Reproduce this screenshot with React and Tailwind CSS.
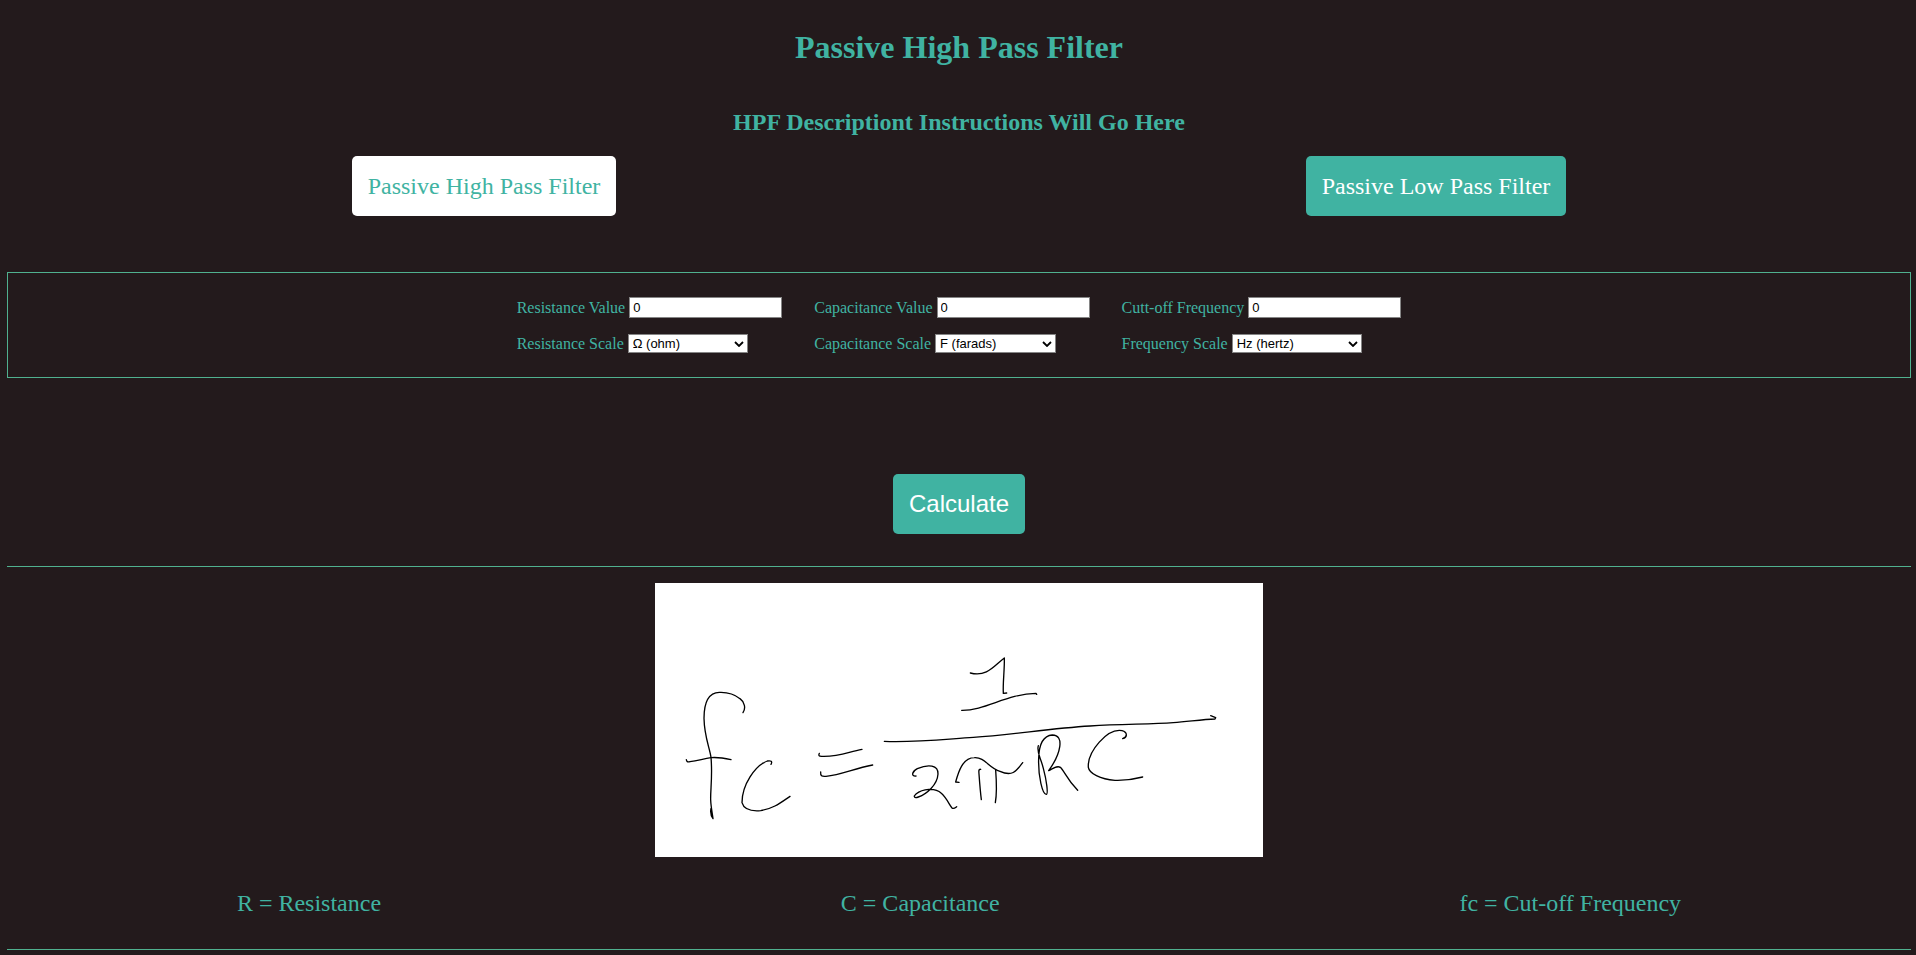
const fields = [
  {
    id: 'resistance',
    valueLabel: 'Resistance Value',
    scaleLabel: 'Resistance Scale',
    units: ['Ω (ohm)', 'kΩ (kiloohm)', 'MΩ (megaohm)'],
    width: 'w-[120px]',
  },
  {
    id: 'capacitance',
    valueLabel: 'Capacitance Value',
    scaleLabel: 'Capacitance Scale',
    units: ['F (farads)', 'µF (microfarads)', 'nF (nanofarads)'],
    width: 'w-[121px]',
  },
  {
    id: 'frequency',
    valueLabel: 'Cutt-off Frequency',
    scaleLabel: 'Frequency Scale',
    units: ['Hz (hertz)', 'kHz (kilohertz)', 'MHz (megahertz)'],
    width: 'w-[130px]',
  },
];

function Field({ id, valueLabel, scaleLabel, units, width }) {
  return (
    <div className="flex flex-col gap-4">
      <div className="flex items-center gap-1">
        <label htmlFor={`${id}-value`}>{valueLabel}</label>
        <input
          id={`${id}-value`}
          type="text"
          defaultValue="0"
          className="h-[21px] w-[153px] border border-[#858585] bg-white px-[3px] font-['Liberation_Sans',Arial,sans-serif] text-[13px] text-black"
        />
      </div>
      <div className="flex items-center gap-1">
        <label htmlFor={`${id}-scale`}>{scaleLabel}</label>
        <div className="relative flex">
          <select
            id={`${id}-scale`}
            className={`h-[19px] ${width} appearance-none border border-[#858585] bg-white px-1 font-['Liberation_Sans',Arial,sans-serif] text-[13px] leading-4 text-black`}
          >
            {units.map((unit) => (
              <option key={unit}>{unit}</option>
            ))}
          </select>
          <svg
            viewBox="0 0 10 6"
            className="pointer-events-none absolute right-1 top-[7px] h-[6px] w-[10px]"
            fill="none"
            stroke="#000"
            strokeWidth="1.8"
            aria-hidden="true"
          >
            <path d="M1 1 5 5 9 1" />
          </svg>
        </div>
      </div>
    </div>
  );
}

function Formula() {
  return (
    <svg
      viewBox="45 39 1824 822"
      className="h-[274px] w-[608px] bg-white"
      fill="none"
      stroke="#000"
      strokeWidth="4"
      strokeLinecap="round"
      strokeLinejoin="round"
      role="img"
      aria-label="Cut-off frequency formula"
    >
      <path d="M309 428C318 415 314 396 300 386C283 372 262 366 238 367C200 368 192 405 192 445C193 500 208 530 213 562C218 620 211 660 212 690C213 712 217 730 219 746C213 738 211 725 213 715" />
      <path d="M139 569C140 575 142 577 150 575C175 572 190 566 213 563C235 561 255 565 273 569" />
      <path d="M393 583C398 574 393 571 382 573C345 587 306 645 306 698C312 720 338 724 362 722C400 716 422 698 450 679" />
      <path d="M538 550C535 557 536 559 545 559C600 561 625 545 666 538" />
      <path d="M542 606C541 618 545 620 558 619C605 614 640 596 698 585" />
      <path d="M991 309C1040 322 1062 288 1093 264C1094 300 1088 340 1090 370L1100 369" />
      <path d="M965 421C1035 422 1100 372 1188 370L1190 373" />
      <path d="M733 514C820 518 910 508 1000 502C1120 494 1230 475 1350 468C1450 462 1530 463 1600 458C1650 454 1690 448 1725 447L1727 443L1712 437" />
      <path d="M828 618C813 620 815 605 832 596C865 582 895 585 894 612C892 645 860 672 835 681C822 686 820 679 828 672C848 656 885 652 904 670C922 686 932 713 938 715C944 716 946 713 950 710" />
      <path d="M957 637L947 636C955 606 968 563 1003 563C1035 561 1045 593 1080 604C1115 620 1128 606 1148 578" />
      <path d="M1022 598C1016 597 1016 602 1017 612C1019 640 1021 665 1024 689" />
      <path d="M1067 600C1070 640 1071 670 1066 698" />
      <path d="M1195 527C1189 548 1202 562 1210 595C1220 632 1225 672 1219 673C1208 674 1194 620 1196 565C1197 520 1212 497 1237 495C1275 495 1262 552 1226 602C1242 594 1252 586 1261 592C1274 604 1280 628 1313 661" />
      <path d="M1448 506C1463 501 1463 487 1446 482C1402 474 1342 545 1345 592C1348 610 1380 628 1425 631C1458 632 1482 628 1508 621" />
    </svg>
  );
}

export default function App() {
  return (
    <main className="min-h-screen bg-[#231a1c] pb-[5px] pl-[7px] pr-[5px] pt-[29px] font-['Liberation_Serif','Times_New_Roman',serif] text-base text-[#40b3a2]">
      <h1 className="text-center text-[32px] font-bold leading-9">Passive High Pass Filter</h1>
      <h2 className="mt-[43px] text-center text-2xl font-bold leading-7">
        HPF Descriptiont Instructions Will Go Here
      </h2>

      <nav className="mt-5 flex justify-around text-2xl leading-7">
        <a href="#high-pass" className="rounded-[5px] bg-white p-4">
          Passive High Pass Filter
        </a>
        <a href="#low-pass" className="rounded-[5px] bg-[#40b3a2] p-4 text-white">
          Passive Low Pass Filter
        </a>
      </nav>

      <form onSubmit={(event) => event.preventDefault()}>
        <div className="mt-14 flex justify-center gap-8 border border-[#50b18f] py-6 leading-[18px]">
          {fields.map((field) => (
            <Field key={field.id} {...field} />
          ))}
        </div>
        <div className="mt-24 flex justify-center">
          <button
            type="submit"
            className="rounded-[5px] bg-[#40b3a2] p-4 font-['Liberation_Sans',Arial,sans-serif] text-2xl leading-7 text-white"
          >
            Calculate
          </button>
        </div>
      </form>

      <section className="mt-8 border-y border-[#50b18f] pb-8 pt-4">
        <div className="flex justify-center">
          <Formula />
        </div>
        <div className="mt-8 flex justify-around text-2xl leading-7">
          <p>R = Resistance</p>
          <p>C = Capacitance</p>
          <p>fc = Cut-off Frequency</p>
        </div>
      </section>
    </main>
  );
}
